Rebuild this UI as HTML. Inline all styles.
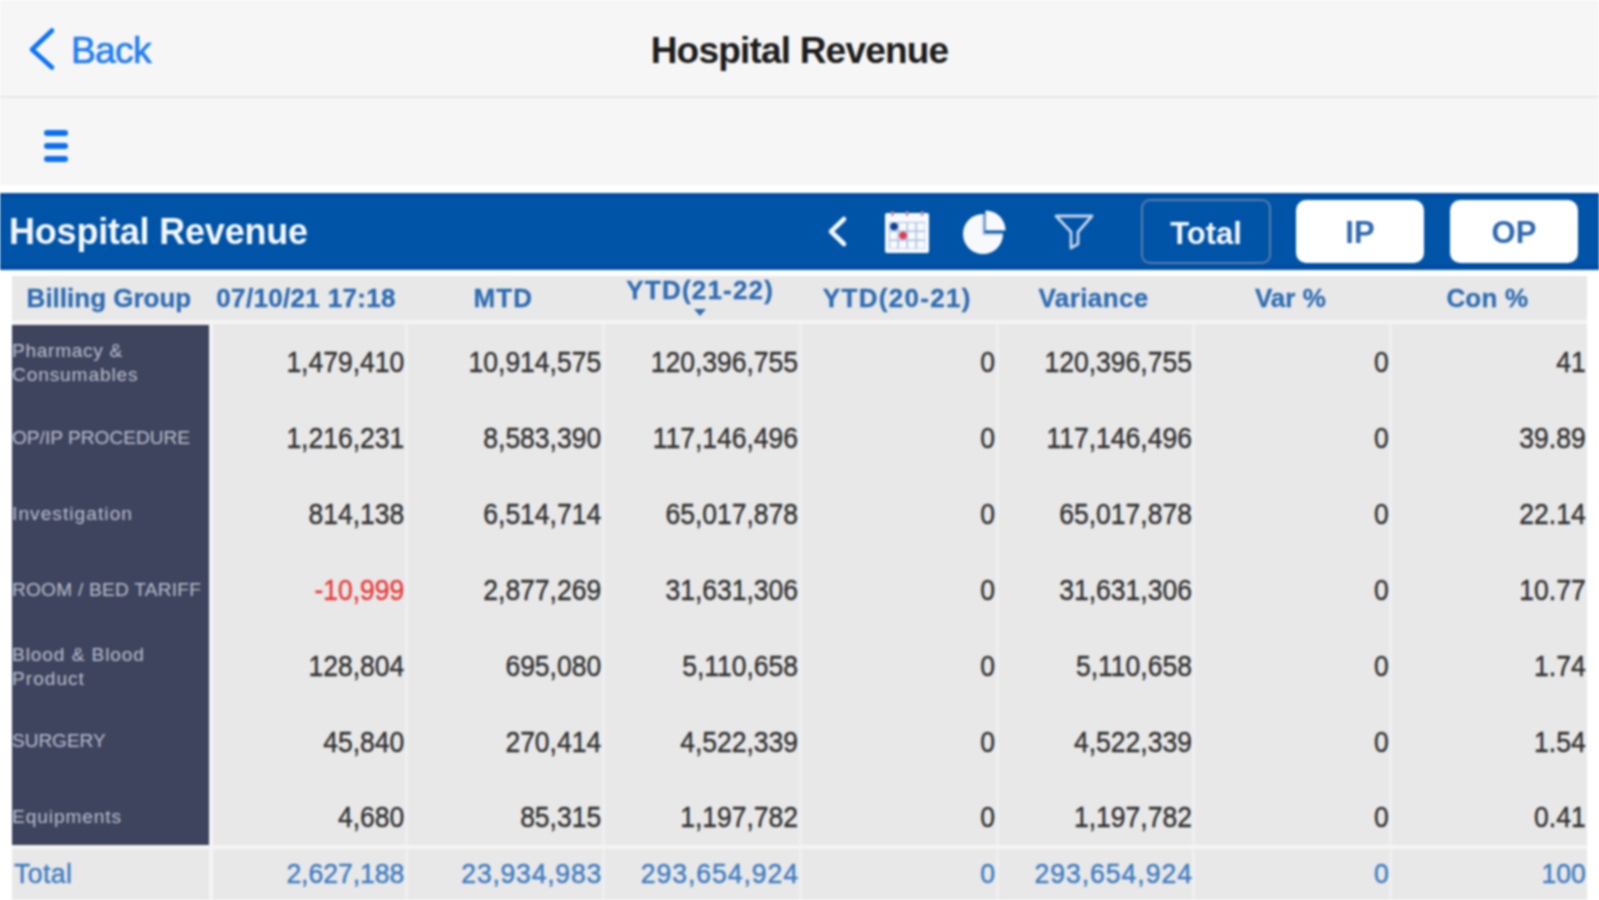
<!DOCTYPE html>
<html><head><meta charset="utf-8"><title>Hospital Revenue</title>
<style>
*{box-sizing:border-box;margin:0;padding:0}
html,body{width:1599px;height:900px;overflow:hidden;background:#fff;font-family:"Liberation Sans",sans-serif}
.abs{position:absolute}
.nav{left:0;top:0;width:1599px;height:96px;background:#f6f6f6}
.navline{left:0;top:96px;width:1599px;height:2px;background:#e6e6e6}
.tool{left:0;top:98px;width:1599px;height:87px;background:#f6f6f6}
.bar{left:0;top:193px;width:1599px;height:77px;background:#0054a7}
.barline{left:0;top:195px;width:1599px;height:2px;background:#00469c}
.barline2{left:0;top:265px;width:1599px;height:2px;background:#00479d}
.t{white-space:nowrap;line-height:1}
.btn{border-radius:10px}
.hdr{left:12px;top:276px;width:1575px;height:44px;background:#e8e8e8}
.sepH{left:12px;width:1575px;background:#f3f4f3}
.body{left:12px;top:324px;width:1575px;height:521px;background:#e8e8e8}
.tot{left:12px;top:849px;width:1575px;height:51px;background:#e8e8e8}
.vs{width:3px;background:#efefef}
.dark{left:12px;top:325px;width:197px;height:520px;background:#3e445e}
.hc{color:#2e6cb3;font-weight:700;font-size:26px;-webkit-text-stroke-width:0.3px;text-align:center;height:45px;line-height:45px}
.num{transform:translateY(1px) scaleY(1.09);color:#303030;font-size:26.5px;-webkit-text-stroke-width:0.35px;text-align:right;line-height:75.9px;height:75.9px}
.tnum{transform:scaleY(1.07);color:#3d7cc2;font-size:26.5px;-webkit-text-stroke-width:0.4px;text-align:right;line-height:49px;height:49px}
.nm{color:#b9bdca;font-size:19px;line-height:23px;display:flex;flex-direction:column;justify-content:center;height:75.9px;overflow:hidden}
#root{position:relative;width:1599px;height:900px;overflow:hidden;filter:blur(1px)}
</style></head><body><div id="root">
<div class="abs nav"></div>
<div class="abs navline"></div>
<div class="abs tool"></div>
<!-- back -->
<svg class="abs" style="left:24px;top:24px" width="40" height="52" viewBox="0 0 40 52">
<polyline points="28,6.5 8,25.5 28,43.5" fill="none" stroke="#0a74f5" stroke-width="4.6" stroke-linecap="round" stroke-linejoin="round"/></svg>
<div class="abs t" style="left:71px;top:32px;font-size:37px;letter-spacing:-0.6px;color:#1f7ef2;-webkit-text-stroke-width:0.7px">Back</div>
<div class="abs t" style="left:0;width:1599px;text-align:center;top:32px;font-size:37px;font-weight:700;letter-spacing:-0.8px;color:#1c1c1c">Hospital Revenue</div>
<!-- hamburger -->
<div class="abs" style="left:44px;top:130px;width:24px;height:6px;border-radius:3px;background:#0a6ff0"></div>
<div class="abs" style="left:44px;top:143px;width:24px;height:6px;border-radius:3px;background:#0a6ff0"></div>
<div class="abs" style="left:44px;top:156px;width:24px;height:6px;border-radius:3px;background:#0a6ff0"></div>
<!-- blue bar -->
<div class="abs bar"></div>
<div class="abs barline"></div>
<div class="abs barline2"></div>
<div class="abs t" style="left:9px;top:214px;font-size:36px;font-weight:700;letter-spacing:-0.2px;color:#f4f7fc">Hospital Revenue</div>
<!-- chevron -->
<svg class="abs" style="left:820px;top:210px" width="36" height="44" viewBox="0 0 36 44">
<polyline points="24,9 11,21.5 24,34" fill="none" stroke="#f4f7fc" stroke-width="4.6" stroke-linecap="round" stroke-linejoin="round"/></svg>
<!-- calendar -->
<svg class="abs" style="left:880px;top:206px" width="54" height="52" viewBox="0 0 54 52">
<rect x="5" y="7" width="44" height="40" rx="2" fill="#f7f9fd"/>
<rect x="9" y="16" width="36" height="27" fill="#a9bfdf"/>
<g fill="#f7f9fd">
<rect x="10" y="17" width="7.5" height="7.5"/><rect x="19" y="17" width="7.5" height="7.5"/><rect x="28" y="17" width="7.5" height="7.5"/><rect x="37" y="17" width="7.5" height="7.5"/>
<rect x="10" y="26" width="7.5" height="7.5"/><rect x="19" y="26" width="7.5" height="7.5"/><rect x="28" y="26" width="7.5" height="7.5"/><rect x="37" y="26" width="7.5" height="7.5"/>
<rect x="10" y="35" width="7.5" height="7.5"/><rect x="19" y="35" width="7.5" height="7.5"/><rect x="28" y="35" width="7.5" height="7.5"/><rect x="37" y="35" width="7.5" height="7.5"/>
</g>
<circle cx="14" cy="20.5" r="3.8" fill="#0b3f93"/>
<circle cx="23" cy="29.5" r="3.8" fill="#e23a4e"/>
<g fill="#c98a9c"><rect x="11" y="5" width="3" height="5" rx="1.5"/><rect x="25.5" y="5" width="3" height="5" rx="1.5"/><rect x="40.5" y="5" width="3" height="5" rx="1.5"/></g>
</svg>
<!-- pie -->
<svg class="abs" style="left:958px;top:204px" width="54" height="54" viewBox="0 0 54 54">
<path d="M25,10 A20,20 0 1 0 45,30 L25,30 Z" fill="#f7f9fd"/>
<path d="M27.5,6.5 A20,20 0 0 1 47.5,26.5 L27.5,26.5 Z" fill="#f7f9fd"/>
<path d="M25.5,10 L25.5,30 L45,30" fill="none" stroke="#b0c4e0" stroke-width="2"/>
</svg>
<!-- filter -->
<svg class="abs" style="left:1048px;top:208px" width="52" height="46" viewBox="0 0 52 46">
<path d="M8,8 L44,8 L30,24 L30,36 L23,40 L23,24 Z" fill="none" stroke="#c6d4ea" stroke-width="2.8" stroke-linejoin="round"/>
</svg>
<!-- buttons -->
<div class="abs btn" style="left:1141px;top:199px;width:130px;height:65px;border:2px solid #5a7eab;border-radius:9px"></div>
<div class="abs t" style="left:1141px;top:217.5px;width:130px;text-align:center;font-size:31px;font-weight:700;color:#f4f7fc">Total</div>
<div class="abs btn" style="left:1296px;top:200px;width:128px;height:63px;background:#fff"></div>
<div class="abs t" style="left:1296px;top:217px;width:128px;text-align:center;font-size:31px;font-weight:700;color:#2f68b0">IP</div>
<div class="abs btn" style="left:1450px;top:200px;width:128px;height:63px;background:#fff"></div>
<div class="abs t" style="left:1450px;top:217px;width:128px;text-align:center;font-size:31px;font-weight:700;color:#2f68b0">OP</div>
<!-- table -->
<div class="abs hdr"></div>
<div class="abs sepH" style="top:320px;height:4px"></div>
<div class="abs body"></div>
<div class="abs sepH" style="top:845px;height:4px"></div>
<div class="abs tot"></div>
<div class="abs vs" style="left:209px;top:324px;height:576px;width:4px;background:#f3f4f3"></div>
<div class="abs vs" style="left:404.8px;top:324px;height:576px"></div>
<div class="abs vs" style="left:601.7px;top:324px;height:576px"></div>
<div class="abs vs" style="left:798.6px;top:324px;height:576px"></div>
<div class="abs vs" style="left:995.5px;top:324px;height:576px"></div>
<div class="abs vs" style="left:1192.4px;top:324px;height:576px"></div>
<div class="abs vs" style="left:1389.3px;top:324px;height:576px"></div>
<div class="abs dark"></div>
<div class="abs hc" style="left:10.5px;top:276px;width:196.9px;letter-spacing:0px">Billing Group</div>
<div class="abs hc" style="left:207.6px;top:276px;width:196.9px;letter-spacing:0.32px">07/10/21 17:18</div>
<div class="abs hc" style="left:404.9px;top:276px;width:196.9px;letter-spacing:1.2px">MTD</div>
<div class="abs hc" style="left:601.8px;top:268px;width:196.9px;letter-spacing:1.2px">YTD(21-22)</div>
<svg class="abs" style="left:693.2px;top:308px" width="14" height="9" viewBox="0 0 14 9"><path d="M1,1 L13,1 L7,8 Z" fill="#2e6cb3"/></svg>
<div class="abs hc" style="left:798.8px;top:276px;width:196.9px;letter-spacing:1.3px">YTD(20-21)</div>
<div class="abs hc" style="left:995.2px;top:276px;width:196.9px;letter-spacing:0.4px">Variance</div>
<div class="abs hc" style="left:1191.9px;top:276px;width:196.9px;letter-spacing:0px">Var %</div>
<div class="abs hc" style="left:1388.9px;top:276px;width:196.9px;letter-spacing:0.2px">Con %</div>
<div class="abs nm" style="left:12px;top:324.0px;width:196px;padding-top:3px;"><div class="t" style="line-height:24px;letter-spacing:0.75px">Pharmacy &amp;</div><div class="t" style="line-height:24px;letter-spacing:0.94px">Consumables</div></div>
<div class="abs num t" style="left:208.9px;top:324.0px;width:195.4px;color:#303030">1,479,410</div>
<div class="abs num t" style="left:405.8px;top:324.0px;width:195.4px;color:#303030">10,914,575</div>
<div class="abs num t" style="left:602.7px;top:324.0px;width:195.4px;color:#303030">120,396,755</div>
<div class="abs num t" style="left:799.6px;top:324.0px;width:195.4px;color:#303030">0</div>
<div class="abs num t" style="left:996.5px;top:324.0px;width:195.4px;color:#303030">120,396,755</div>
<div class="abs num t" style="left:1193.4px;top:324.0px;width:195.4px;color:#303030">0</div>
<div class="abs num t" style="left:1390.3px;top:324.0px;width:195.4px;color:#303030">41</div>
<div class="abs nm" style="left:12px;top:399.9px;width:196px;"><div class="t" style="line-height:24px;letter-spacing:0.07px">OP/IP PROCEDURE</div></div>
<div class="abs num t" style="left:208.9px;top:399.9px;width:195.4px;color:#303030">1,216,231</div>
<div class="abs num t" style="left:405.8px;top:399.9px;width:195.4px;color:#303030">8,583,390</div>
<div class="abs num t" style="left:602.7px;top:399.9px;width:195.4px;color:#303030">117,146,496</div>
<div class="abs num t" style="left:799.6px;top:399.9px;width:195.4px;color:#303030">0</div>
<div class="abs num t" style="left:996.5px;top:399.9px;width:195.4px;color:#303030">117,146,496</div>
<div class="abs num t" style="left:1193.4px;top:399.9px;width:195.4px;color:#303030">0</div>
<div class="abs num t" style="left:1390.3px;top:399.9px;width:195.4px;color:#303030">39.89</div>
<div class="abs nm" style="left:12px;top:475.8px;width:196px;"><div class="t" style="line-height:24px;letter-spacing:1.1px">Investigation</div></div>
<div class="abs num t" style="left:208.9px;top:475.8px;width:195.4px;color:#303030">814,138</div>
<div class="abs num t" style="left:405.8px;top:475.8px;width:195.4px;color:#303030">6,514,714</div>
<div class="abs num t" style="left:602.7px;top:475.8px;width:195.4px;color:#303030">65,017,878</div>
<div class="abs num t" style="left:799.6px;top:475.8px;width:195.4px;color:#303030">0</div>
<div class="abs num t" style="left:996.5px;top:475.8px;width:195.4px;color:#303030">65,017,878</div>
<div class="abs num t" style="left:1193.4px;top:475.8px;width:195.4px;color:#303030">0</div>
<div class="abs num t" style="left:1390.3px;top:475.8px;width:195.4px;color:#303030">22.14</div>
<div class="abs nm" style="left:12px;top:551.7px;width:196px;"><div class="t" style="line-height:24px;letter-spacing:0.3px">ROOM / BED TARIFF</div></div>
<div class="abs num t" style="left:208.9px;top:551.7px;width:195.4px;color:#e83a3a">-10,999</div>
<div class="abs num t" style="left:405.8px;top:551.7px;width:195.4px;color:#303030">2,877,269</div>
<div class="abs num t" style="left:602.7px;top:551.7px;width:195.4px;color:#303030">31,631,306</div>
<div class="abs num t" style="left:799.6px;top:551.7px;width:195.4px;color:#303030">0</div>
<div class="abs num t" style="left:996.5px;top:551.7px;width:195.4px;color:#303030">31,631,306</div>
<div class="abs num t" style="left:1193.4px;top:551.7px;width:195.4px;color:#303030">0</div>
<div class="abs num t" style="left:1390.3px;top:551.7px;width:195.4px;color:#303030">10.77</div>
<div class="abs nm" style="left:12px;top:627.6px;width:196px;padding-top:3px;"><div class="t" style="line-height:24px;letter-spacing:0.96px">Blood &amp; Blood</div><div class="t" style="line-height:24px;letter-spacing:1.07px">Product</div></div>
<div class="abs num t" style="left:208.9px;top:627.6px;width:195.4px;color:#303030">128,804</div>
<div class="abs num t" style="left:405.8px;top:627.6px;width:195.4px;color:#303030">695,080</div>
<div class="abs num t" style="left:602.7px;top:627.6px;width:195.4px;color:#303030">5,110,658</div>
<div class="abs num t" style="left:799.6px;top:627.6px;width:195.4px;color:#303030">0</div>
<div class="abs num t" style="left:996.5px;top:627.6px;width:195.4px;color:#303030">5,110,658</div>
<div class="abs num t" style="left:1193.4px;top:627.6px;width:195.4px;color:#303030">0</div>
<div class="abs num t" style="left:1390.3px;top:627.6px;width:195.4px;color:#303030">1.74</div>
<div class="abs nm" style="left:12px;top:703.5px;width:196px;"><div class="t" style="line-height:24px;letter-spacing:0px">SURGERY</div></div>
<div class="abs num t" style="left:208.9px;top:703.5px;width:195.4px;color:#303030">45,840</div>
<div class="abs num t" style="left:405.8px;top:703.5px;width:195.4px;color:#303030">270,414</div>
<div class="abs num t" style="left:602.7px;top:703.5px;width:195.4px;color:#303030">4,522,339</div>
<div class="abs num t" style="left:799.6px;top:703.5px;width:195.4px;color:#303030">0</div>
<div class="abs num t" style="left:996.5px;top:703.5px;width:195.4px;color:#303030">4,522,339</div>
<div class="abs num t" style="left:1193.4px;top:703.5px;width:195.4px;color:#303030">0</div>
<div class="abs num t" style="left:1390.3px;top:703.5px;width:195.4px;color:#303030">1.54</div>
<div class="abs nm" style="left:12px;top:779.4px;width:196px;"><div class="t" style="line-height:24px;letter-spacing:0.97px">Equipments</div></div>
<div class="abs num t" style="left:208.9px;top:779.4px;width:195.4px;color:#303030">4,680</div>
<div class="abs num t" style="left:405.8px;top:779.4px;width:195.4px;color:#303030">85,315</div>
<div class="abs num t" style="left:602.7px;top:779.4px;width:195.4px;color:#303030">1,197,782</div>
<div class="abs num t" style="left:799.6px;top:779.4px;width:195.4px;color:#303030">0</div>
<div class="abs num t" style="left:996.5px;top:779.4px;width:195.4px;color:#303030">1,197,782</div>
<div class="abs num t" style="left:1193.4px;top:779.4px;width:195.4px;color:#303030">0</div>
<div class="abs num t" style="left:1390.3px;top:779.4px;width:195.4px;color:#303030">0.41</div>
<div class="abs sepH" style="top:845px;height:4px"></div>
<div class="abs tot"></div>
<div class="abs vs" style="left:209px;top:849px;height:51px;width:4px;background:#f3f4f3"></div>
<div class="abs vs" style="left:404.8px;top:849px;height:51px"></div>
<div class="abs vs" style="left:601.7px;top:849px;height:51px"></div>
<div class="abs vs" style="left:798.6px;top:849px;height:51px"></div>
<div class="abs vs" style="left:995.5px;top:849px;height:51px"></div>
<div class="abs vs" style="left:1192.4px;top:849px;height:51px"></div>
<div class="abs vs" style="left:1389.3px;top:849px;height:51px"></div>
<div class="abs t tnum" style="left:14px;top:849px;text-align:left;letter-spacing:0.5px">Total</div>
<div class="abs t tnum" style="left:208.9px;top:849px;width:195.4px;letter-spacing:0px">2,627,188</div>
<div class="abs t tnum" style="left:405.8px;top:849px;width:196.2px;letter-spacing:0.8px">23,934,983</div>
<div class="abs t tnum" style="left:602.7px;top:849px;width:196.4px;letter-spacing:1.0px">293,654,924</div>
<div class="abs t tnum" style="left:799.6px;top:849px;width:195.4px;letter-spacing:0px">0</div>
<div class="abs t tnum" style="left:996.5px;top:849px;width:196.4px;letter-spacing:1.0px">293,654,924</div>
<div class="abs t tnum" style="left:1193.4px;top:849px;width:195.4px;letter-spacing:0px">0</div>
<div class="abs t tnum" style="left:1390.3px;top:849px;width:195.4px;letter-spacing:0px">100</div>
</div></body></html>
